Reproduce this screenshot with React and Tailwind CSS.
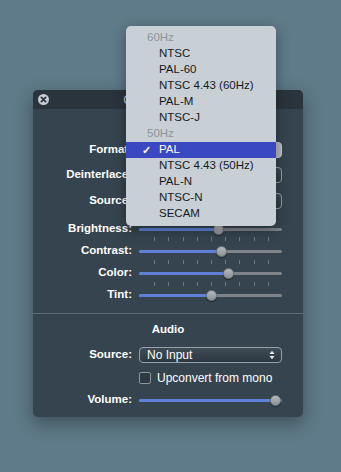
import React from 'react';

const font = { fontFamily: '"Liberation Sans", Arial, sans-serif' };

const menuItems = [
  { label: '60Hz', header: true },
  { label: 'NTSC' },
  { label: 'PAL-60' },
  { label: 'NTSC 4.43 (60Hz)' },
  { label: 'PAL-M' },
  { label: 'NTSC-J' },
  { label: '50Hz', header: true },
  { label: 'PAL', selected: true },
  { label: 'NTSC 4.43 (50Hz)' },
  { label: 'PAL-N' },
  { label: 'NTSC-N' },
  { label: 'SECAM' },
];

function Label({ children }) {
  return (
    <div className="w-[99px] shrink-0 text-right text-[11.5px] font-bold leading-none text-white">
      {children}
    </div>
  );
}

function Arrows() {
  return (
    <svg width="6" height="10" viewBox="0 0 6 10" className="shrink-0">
      <path d="M0.5 4 L3 0.8 L5.5 4 Z" fill="#e8ecef" />
      <path d="M0.5 6 L3 9.2 L5.5 6 Z" fill="#e8ecef" />
    </svg>
  );
}

// popups that sit under the open menu only show their right edge
function Popup({ text, pressed }) {
  return (
    <div
      className={
        'flex h-[16px] w-[143px] items-center justify-between rounded-[4px] border pl-[7px] pr-[6px] text-[12px] leading-none text-white ' +
        (pressed
          ? 'border-[#c9ced2] bg-[#b3b9be]'
          : 'border-[#98a1a8] bg-gradient-to-b from-[#3f4c56] to-[#2c3841]')
      }
    >
      <span>{text}</span>
      <Arrows />
    </div>
  );
}

function Slider({ value }) {
  return (
    <div className="relative h-[12px] w-[143px]">
      <div className="absolute left-0 right-0 top-[5px] h-[3px] rounded-full bg-[#7d8388]" />
      <div
        className="absolute left-0 top-[5px] h-[3px] rounded-full bg-[#5e80d8]"
        style={{ width: value }}
      />
      <div
        className="absolute top-[1px] h-[11px] w-[11px] rounded-full border border-[#6d7378] bg-gradient-to-b from-[#b4b8bb] to-[#8d9296] shadow-[0_1px_1px_rgba(0,0,0,0.4)]"
        style={{ left: value - 5.5 }}
      />
    </div>
  );
}

function Ticks() {
  const xs = [15, 29, 44, 58, 72, 86, 100, 115, 129];
  return (
    <div className="flex h-[4px]">
      <div className="w-[106px] shrink-0" />
      <div className="relative h-[4px] w-[143px]">
        {xs.map((x) => (
          <div key={x} className="absolute top-0 h-[4px] w-px bg-[#6f7c85]" style={{ left: x }} />
        ))}
      </div>
    </div>
  );
}

function Row({ label, children, className = '' }) {
  return (
    <div className={'flex items-center gap-[7px] ' + className}>
      <Label>{label}</Label>
      {children}
    </div>
  );
}

export default function App() {
  return (
    <div className="relative h-[472px] w-[341px] overflow-hidden bg-[#5f7a88]" style={font}>
      {/* Panel */}
      <div className="absolute left-[33px] top-[90px] flex h-[327px] w-[270px] flex-col overflow-hidden rounded-[5px] bg-[#35444f] shadow-[0_6px_18px_rgba(0,0,0,0.35)]">
        <div className="relative flex h-[19px] shrink-0 items-center justify-center bg-[#2a343c]">
          <svg width="11" height="11" viewBox="0 0 11 11" className="absolute left-[5px] top-[4px]">
            <circle cx="5.5" cy="5.5" r="5.5" fill="#c9cdd1" />
            <path d="M3.4 3.4 L7.6 7.6 M7.6 3.4 L3.4 7.6" stroke="#2a343c" strokeWidth="1.8" strokeLinecap="round" />
          </svg>
          <span className="text-[12px] leading-none text-[#c3c9ce]">Capture Settings</span>
        </div>

        <div className="mt-[8px] h-[16px]" />
        <Row label="Format:" className="mt-[9px] h-[16px]">
          <Popup text="" pressed />
        </Row>
        <Row label="Deinterlace:" className="mt-[9px] h-[16px]">
          <Popup text="" />
        </Row>
        <Row label="Source:" className="mt-[10px] h-[16px]">
          <Popup text="" />
        </Row>
        <Row label="Brightness:" className="mt-[14px] h-[12px]">
          <Slider value={79} />
        </Row>
        <div className="mt-[2px]"><Ticks /></div>
        <Row label="Contrast:" className="mt-[4px] h-[12px]">
          <Slider value={82} />
        </Row>
        <div className="mt-[3px]"><Ticks /></div>
        <Row label="Color:" className="mt-[3px] h-[12px]">
          <Slider value={89} />
        </Row>
        <div className="mt-[3px]"><Ticks /></div>
        <Row label="Tint:" className="mt-[3px] h-[12px]">
          <Slider value={72} />
        </Row>

        <div className="mt-[12px] h-px w-full bg-[#5d6c77]" />

        <div className="mt-[8px] flex h-[16px] items-center justify-center text-[11.5px] font-bold text-white">
          Audio
        </div>
        <Row label="Source:" className="mt-[9px] h-[16px]">
          <Popup text="No Input" />
        </Row>
        <div className="mt-[9px] flex h-[12px] items-center">
          <div className="w-[106px] shrink-0" />
          <div className="h-[12px] w-[12px] rounded-[2px] border border-[#8d959b] bg-[#2e3a43]" />
          <span className="ml-[6px] text-[12px] leading-none text-white">Upconvert from mono</span>
        </div>
        <Row label="Volume:" className="mt-[10px] h-[12px]">
          <Slider value={136} />
        </Row>
      </div>

      {/* Popup menu */}
      <div className="absolute left-[126px] top-[26px] w-[150px] rounded-[5px] bg-[#c8d0d6] py-[4px] shadow-[0_4px_14px_rgba(0,0,0,0.35)]">
        {menuItems.map((it) => (
          <div
            key={it.label}
            className={
              'relative flex h-[16px] items-center text-[11.5px] leading-none ' +
              (it.selected ? 'bg-[#3a48c2] text-white' : '') +
              (it.header ? ' pl-[21px] text-[#8c959c]' : ' pl-[33px]') +
              (!it.header && !it.selected ? ' text-[#15191c]' : '')
            }
          >
            {it.selected && <span className="absolute left-[16px] text-[11px] font-bold">✓</span>}
            {it.label}
          </div>
        ))}
      </div>
    </div>
  );
}
